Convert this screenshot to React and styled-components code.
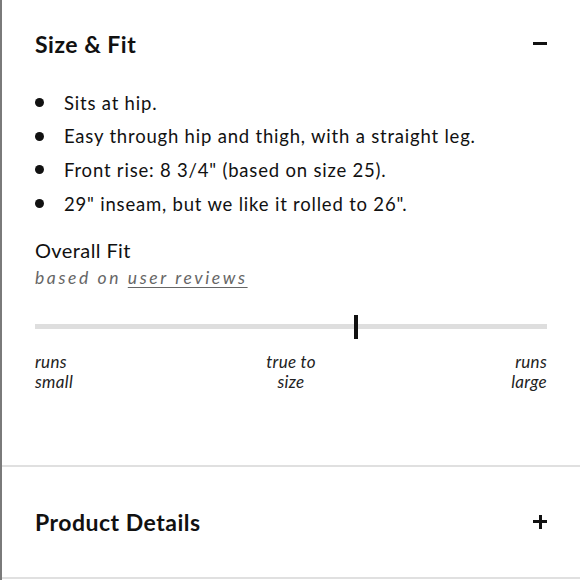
import React from "react";
import styled, { createGlobalStyle } from "styled-components";

const GlobalStyle = createGlobalStyle`
  html, body {
    margin: 0;
    padding: 0;
    background: #fff;
  }
  body {
    font-family: 'Lato', 'Liberation Sans', sans-serif;
    color: #111;
  }
`

const Panel = styled.div`
  width: 580px;
  height: 580px;
  box-sizing: border-box;
  border-left: 2px solid #7a7a7a;
  overflow: hidden;
`

const Section = styled.section`
  border-bottom: 2px solid #e0e0e0;
`

const Header = styled.div`
  display: flex;
  justify-content: space-between;
  align-items: center;
  padding: 0 33px;
  height: ${p => p.$h}px;
`

const Title = styled.h2`
  margin: 0;
  font-size: 23px;
  font-weight: 700;
  letter-spacing: 0.5px;
  color: #111;
`

const Toggle = styled.span`
  position: relative;
  width: 14px;
  height: 14px;
  display: inline-block;

  &::before {
    content: '';
    position: absolute;
    left: 0;
    top: 5px;
    width: 14px;
    height: 3px;
    background: #111;
  }

  &::after {
    content: '';
    display: ${p => (p.$open ? 'none' : 'block')};
    position: absolute;
    left: 5.5px;
    top: 0;
    width: 3px;
    height: 14px;
    background: #111;
  }
`

const List = styled.ul`
  list-style: none;
  margin: -2px 0 0;
  padding: 0 33px;
  display: flex;
  flex-direction: column;
`

const Item = styled.li`
  display: flex;
  align-items: center;
  height: 33.6px;
  font-size: 18.5px;
  letter-spacing: 0.8px;
  color: #111;

  &::before {
    content: '';
    width: 9px;
    height: 9px;
    border-radius: 50%;
    background: #111;
    margin: 0 20px 0 0;
    flex: none;
  }
`

const Fit = styled.div`
  padding: 0 33px;
  margin-top: 17px;
`

const FitTitle = styled.div`
  font-size: 20px;
  letter-spacing: 0.4px;
  line-height: 26px;
`

const FitNote = styled.div`
  font-size: 17.5px;
  font-style: italic;
  letter-spacing: 2.6px;
  color: #666;
  line-height: 30px;

  a {
    color: #666;
    text-decoration: underline;
    text-underline-offset: 3px;
  }
`

const Track = styled.div`
  position: relative;
  margin: 31px 0 0 0;
  height: 5px;
  background: #dedede;
`

const Marker = styled.div`
  position: absolute;
  top: -9px;
  width: 4px;
  height: 24px;
  background: #111;
  transform: translateX(-50%);
`

const Scale = styled.div`
  display: flex;
  justify-content: space-between;
  margin-top: 23px;
`

const ScaleLabel = styled.div`
  width: 100px;
  font-size: 17px;
  font-style: italic;
  letter-spacing: 0.3px;
  line-height: 20px;
  color: #222;
  text-align: ${p => p.$align};
`

const Spacer = styled.div`
  height: ${p => p.$h}px;
`

const fitValue = 0.626

export default function App() {
  return (
    <Panel>
      <GlobalStyle />
      <Section>
        <Header $h={88}>
          <Title>Size &amp; Fit</Title>
          <Toggle $open />
        </Header>
        <List>
          <Item>Sits at hip.</Item>
          <Item>Easy through hip and thigh, with a straight leg.</Item>
          <Item>Front rise: 8 3/4" (based on size 25).</Item>
          <Item>29" inseam, but we like it rolled to 26".</Item>
        </List>
        <Fit>
          <FitTitle>Overall Fit</FitTitle>
          <FitNote>
            based on <a>user reviews</a>
          </FitNote>
          <Track>
            <Marker style={{ left: `${fitValue * 100}%` }} />
          </Track>
          <Scale>
            <ScaleLabel $align="left">runs<br />small</ScaleLabel>
            <ScaleLabel $align="center">true to<br />size</ScaleLabel>
            <ScaleLabel $align="right">runs<br />large</ScaleLabel>
          </Scale>
        </Fit>
        <Spacer $h={73} />
      </Section>
      <Section>
        <Header $h={110}>
          <Title>Product Details</Title>
          <Toggle />
        </Header>
      </Section>
    </Panel>
  );
}
